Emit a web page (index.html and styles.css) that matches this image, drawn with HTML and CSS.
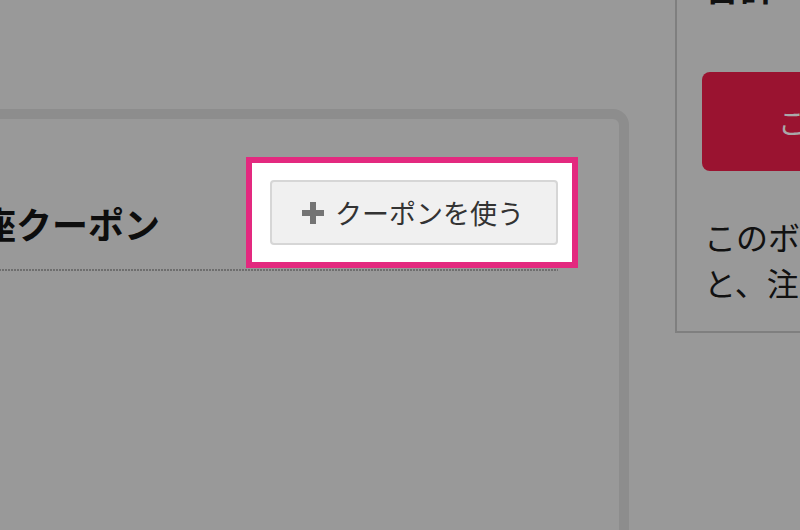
FILE: index.html
```html
<!DOCTYPE html>
<html lang="ja">
<head>
    <meta charset="UTF-8">
    <meta name="viewport" content="width=device-width, initial-scale=1.0">
    <title>ご注文内容の確認</title>
    <link rel="stylesheet" href="styles.css">
</head>
<body>
    <div class="page">
        <div class="card">
            <div class="card-head">
                <h2>口座クーポン</h2>
                <div class="btn-wrap">
                    <div class="highlight"></div>
                    <button class="use-btn">
                        <svg class="plus" width="22" height="22" viewBox="0 0 22 22">
                            <rect x="8" y="0" width="6" height="22"/>
                            <rect x="0" y="8" width="22" height="6"/>
                        </svg>
                        クーポンを使う
                    </button>
                </div>
            </div>
        </div>

        <div class="summary">
            <h3>合計</h3>
            <button class="order-btn">この内容で注文する</button>
            <p>このボタンをクリックすると、注文が確定します。</p>
        </div>
    </div>
</body>
</html>
```

FILE: styles.css
```css
body {
    margin: 0;
    background-color: #999999;
    font-family: "Noto Sans CJK JP", "Noto Sans", sans-serif;
    overflow: hidden;
    height: 530px;
}
.page {
    display: flex;
    align-items: flex-start;
    gap: 46px;
    margin-left: -60px;
}
.card {
    flex: 0 0 689px;
    box-sizing: border-box;
    height: 500px;
    margin-top: 109px;
    border: 10px solid #8d8d8d;
    border-radius: 16px;
    padding: 61px 61px 0 25px;
}
.card-head {
    display: flex;
    justify-content: space-between;
    align-items: flex-end;
    padding-bottom: 26px;
    /* square dots under the heading */
    background-image: repeating-linear-gradient(to right, #6e6e6e 0 2px, transparent 2px 3px);
    background-size: 100% 2px;
    background-repeat: no-repeat;
    background-position: left bottom;
}
.card-head h2 {
    margin: 0;
    font-size: 36px;
    line-height: 44px;
    font-weight: bold;
    color: #0d0d0d;
    white-space: nowrap;
    direction: rtl;
    width: 185px;
    overflow: hidden;
}
.btn-wrap {
    position: relative;
}
/* white box round the button */
.highlight {
    position: absolute;
    top: -23px;
    bottom: -23px;
    left: -24px;
    right: -20px;
    border: 6px solid #e3297f;
    background: white;
}
.use-btn {
    position: relative;
    display: flex;
    align-items: center;
    gap: 11px;
    box-sizing: border-box;
    width: 288px;
    height: 65px;
    padding: 0 0 0 30px;
    background-color: #f0f0f0;
    border: 2px solid #d6d6d6;
    border-radius: 4px;
    font-family: inherit;
    font-size: 27px;
    color: #333;
}
.plus {
    fill: #747474;
    flex: 0 0 22px;
}
.summary {
    flex: 0 0 auto;
    width: 404px;
    margin-top: -39px;
    padding: 0 40px 26px 27px;
    border: 2px solid #7f7f7f;
}
.summary h3 {
    margin: 0;
    font-size: 36px;
    line-height: 44px;
    color: #111;
}
.order-btn {
    display: block;
    width: 100%;
    height: 99px;
    margin-top: 65px;
    margin-left: -2px;
    border: none;
    border-radius: 8px;
    background-color: #9a1330;
    color: #a9a9a9;
    font-family: inherit;
    font-size: 28px;
}
.summary p {
    margin: 42px 0 0;
    font-size: 32px;
    line-height: 46px;
    color: #111;
}
```
